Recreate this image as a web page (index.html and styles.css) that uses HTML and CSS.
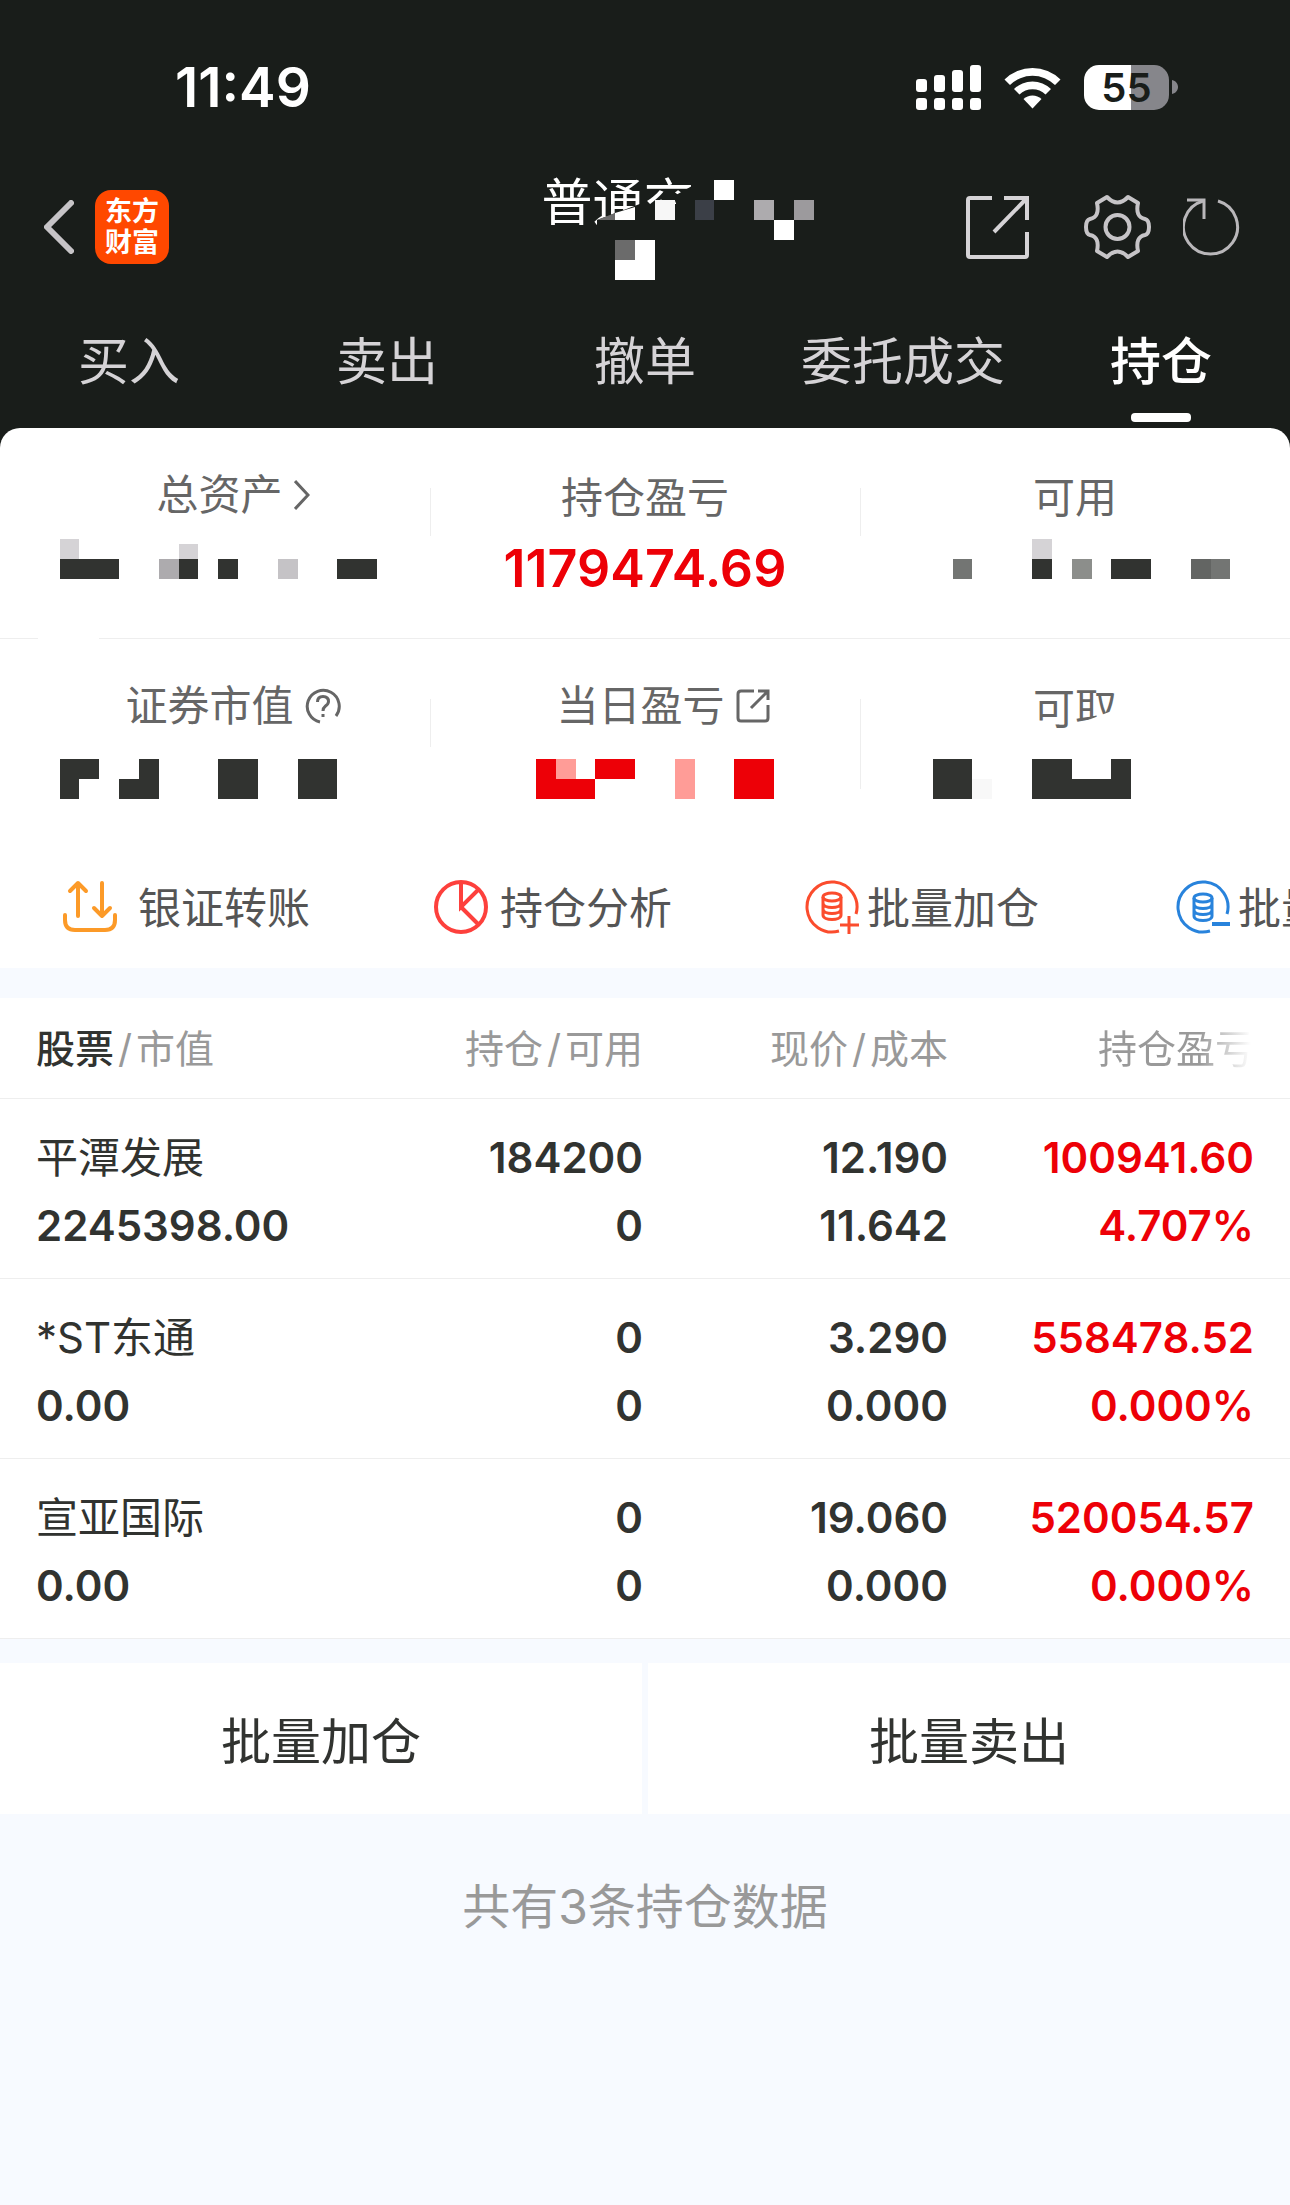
FILE: index.html
```html
<!DOCTYPE html>
<html lang="zh-CN">
	<head>
		<meta charset="utf-8">
		<meta name="viewport" content="width=device-width, initial-scale=1">
		<title>持仓</title>
		<link rel="stylesheet" href="styles.css">
	</head>
	<body>

		<div class="top">

			<div class="status">
				<span class="time">11:49</span>
				<div class="status-icons">
					<svg class="signal" width="65" height="45" viewBox="0 0 65 45" fill="#fff">
						<rect x="0" y="14" width="11" height="13" rx="3"/>
						<rect x="18" y="10" width="11" height="17" rx="3"/>
						<rect x="36" y="5" width="11" height="22" rx="3"/>
						<rect x="54" y="0" width="11" height="27" rx="3"/>
						<rect x="0" y="33" width="11" height="12" rx="3"/>
						<rect x="18" y="33" width="11" height="12" rx="3"/>
						<rect x="36" y="33" width="11" height="12" rx="3"/>
						<rect x="54" y="33" width="11" height="12" rx="3"/>
					</svg>
					<svg class="wifi" width="57" height="43" viewBox="0 0 57 43" fill="#fff">
						<path d="M0.500 13.500 A40 40 0 0 1 56.500 13.500 L51 19 A32 32 0 0 0 6 19 Z"/>
						<path d="M10 23 A26.500 26.500 0 0 1 47 23 L41.500 28.500 A18.500 18.500 0 0 0 15.500 28.500 Z"/>
						<path d="M19.500 33 A13 13 0 0 1 37.500 33 L28.500 42.500 Z"/>
					</svg>
					<div class="battery">
						<span class="level">55</span>
						<svg width="6" height="14" viewBox="0 0 6 14" fill="#86868b"><path d="M0 0 C8 2 8 12 0 14 Z"/></svg>
					</div>
				</div>
			</div>

			<header class="nav">
				<div class="nav-left">
					<button class="icon-btn" type="button" aria-label="返回">
						<svg width="30" height="54" viewBox="0 0 30 54" fill="none" stroke="#c6c4c7" stroke-width="6" stroke-linecap="round" stroke-linejoin="round"><path d="M27 3 L3 27 L27 51"/></svg>
					</button>
					<a class="logo" href="#">东方<br>财富</a>
				</div>
				<div class="title">
					<h1>普通交</h1>
					<!-- masked account name -->
					<svg class="title-mask" width="290" height="106" viewBox="542 174 290 106">
						<path fill="#191d1a" d="M597 220 L645 202 L645 204 L676 204 V195 L692 186 H748 V236 H597 Z"/>
						<path fill="#6b6b6b" d="M597 220 L615 213 V220 Z"/>
						<path fill="#fff" d="M615 213 L635 207 V220 H615 Z"/>
						<rect x="655" y="200" width="20" height="20" fill="#f7f7f7"/>
						<rect x="695" y="200" width="19" height="20" fill="#3b3f47"/>
						<rect x="714" y="180" width="20" height="20" fill="#fff"/>
						<rect x="754" y="200" width="20" height="20" fill="#adabae"/>
						<rect x="794" y="200" width="20" height="20" fill="#9c9a9d"/>
						<rect x="774" y="220" width="20" height="20" fill="#fff"/>
						<path fill="#fff" d="M615 260 H635 V240 H655 V280 H615 Z"/>
						<rect x="615" y="240" width="20" height="20" fill="#6b6b6b"/>
					</svg>
				</div>
				<div class="nav-right">
					<button class="icon-btn" type="button" aria-label="分享">
						<svg width="63" height="63" viewBox="0 0 63 63" fill="none" stroke="#d5d3d6" stroke-width="4">
							<path d="M26 2 H4 Q2 2 2 4 V59 Q2 61 4 61 H59 Q61 61 61 59 V36"/>
							<path d="M38 2 H61 V24 M60 3 L28 36"/>
						</svg>
					</button>
					<button class="icon-btn gear" type="button" aria-label="设置">
						<svg width="67" height="66" viewBox="0 0 67 66" fill="none" stroke="#c6c4c7" stroke-width="4" stroke-linejoin="round">
							<path d="M23 3 Q33.500 14 44 3 L54 9 Q51 23 61 25 Q65 26 65 33 Q65 40 61 41 Q51 43 54 57 L44 63 Q33.500 52 23 63 L13 57 Q16 43 6 41 Q2 40 2 33 Q2 26 6 25 Q16 23 13 9 Z"/>
							<circle cx="33.500" cy="33" r="12"/>
						</svg>
					</button>
					<button class="icon-btn" type="button" aria-label="刷新">
						<svg width="58" height="58" viewBox="0 0 58 58" fill="none" stroke="#b9b7ba" stroke-width="3">
							<path d="M35 3 A27 27 0 1 1 20 3"/>
							<path d="M4 2 H21 V21"/>
						</svg>
					</button>
				</div>
			</header>

			<nav class="tabs">
				<a href="#">买入</a>
				<a href="#">卖出</a>
				<a href="#">撤单</a>
				<a href="#">委托成交</a>
				<a class="active" href="#">持仓</a>
			</nav>

			<section class="summary">
				<div class="summary-row">
					<div class="cell">
						<a class="label linked" href="#">总资产
							<svg class="chevron" width="16" height="30" viewBox="0 0 16 30" fill="none" stroke="#666" stroke-width="3"><path d="M1 1 L14 15 L1 29"/></svg>
						</a>
						<svg class="mask" width="430" height="60" viewBox="0 538 430 60" fill="#313330">
							<rect x="60" y="539" width="19" height="20" fill="#d5d3d6"/>
							<rect x="60" y="559" width="59" height="20"/>
							<rect x="159" y="559" width="20" height="20" fill="#adabae"/>
							<rect x="179" y="544" width="19" height="15" fill="#d5d3d6"/>
							<rect x="179" y="559" width="19" height="20"/>
							<rect x="218" y="559" width="20" height="20"/>
							<rect x="278" y="559" width="20" height="20" fill="#c5c3c6"/>
							<rect x="337" y="559" width="40" height="20"/>
						</svg>
					</div>
					<div class="cell divided">
						<span class="label">持仓盈亏</span>
						<span class="amount">1179474.69</span>
					</div>
					<div class="cell divided">
						<span class="label">可用</span>
						<svg class="mask" width="430" height="60" viewBox="860 538 430 60" fill="#313330">
							<rect x="953" y="559" width="19" height="20" fill="#737573"/>
							<rect x="1032" y="539" width="20" height="20" fill="#d5d3d6"/>
							<rect x="1032" y="559" width="20" height="20"/>
							<rect x="1072" y="559" width="20" height="20" fill="#8c8e8b"/>
							<rect x="1111" y="559" width="40" height="20"/>
							<rect x="1191" y="559" width="20" height="20" fill="#636563"/>
							<rect x="1211" y="559" width="19" height="20" fill="#737573"/>
						</svg>
					</div>
				</div>
				<div class="rule"></div>
				<div class="summary-row">
					<div class="cell">
						<a class="label linked" href="#">证券市值
							<svg width="36" height="36" viewBox="0 0 36 36" fill="none" stroke="#666" stroke-width="3">
								<path d="M15 34 A16 16 0 1 1 31 28"/>
								<path d="M12.500 14 Q12.500 8.500 18 8.500 Q23.500 8.500 23.500 13.500 Q23.500 16 20.500 18 Q18 20 18 23 M18 26 V29"/>
							</svg>
						</a>
						<svg class="mask" width="430" height="60" viewBox="0 749 430 60" fill="#313330">
							<path d="M60 759 H99 V779 H79 V799 H60 Z"/>
							<path d="M139 759 H159 V799 H119 V779 H139 Z"/>
							<rect x="218" y="759" width="40" height="40"/>
							<rect x="298" y="759" width="39" height="40"/>
						</svg>
					</div>
					<div class="cell divided">
						<a class="label linked" href="#">当日盈亏
							<svg width="34" height="34" viewBox="0 0 34 34" fill="none" stroke="#666" stroke-width="3">
								<path d="M18 2 H5 Q2 2 2 5 V29 Q2 32 5 32 H29 Q32 32 32 29 V16"/>
								<path d="M22 2 H32 V11 M31 3 L15 19"/>
							</svg>
						</a>
						<svg class="mask" width="430" height="60" viewBox="430 749 430 60" fill="#ed0007">
							<path d="M536 759 H556 V779 H595 V799 H536 Z"/>
							<rect x="556" y="759" width="20" height="20" fill="#ff9c97"/>
							<rect x="595" y="759" width="40" height="20"/>
							<rect x="675" y="759" width="20" height="40" fill="#ff9c97"/>
							<rect x="734" y="759" width="40" height="40"/>
						</svg>
					</div>
					<div class="cell divided tall">
						<span class="label">可<span class="cut">取</span></span>
						<svg class="mask" width="430" height="60" viewBox="860 749 430 60" fill="#313330">
							<rect x="933" y="759" width="39" height="40"/>
							<rect x="972" y="779" width="20" height="20" fill="#f8f8f8"/>
							<path d="M1032 759 H1072 V779 H1111 V759 H1131 V799 H1032 Z"/>
						</svg>
					</div>
				</div>

				<div class="shortcuts">
					<a class="transfer" href="#">
						<svg width="54" height="54" viewBox="0 0 54 54" fill="none" stroke="#fc9a28" stroke-width="4" stroke-linecap="round" stroke-linejoin="round">
							<path d="M2 35 V40 Q2 50 12 50 H42 Q52 50 52 40 V35"/>
							<path d="M15 36 V3 M7 11 L15 3 L23 11"/>
							<path d="M39 3 V36 M31 28 L39 36 L47 28"/>
						</svg>
						银证转账
					</a>
					<a href="#">
						<svg width="54" height="54" viewBox="0 0 54 54" fill="none" stroke="#fd403c" stroke-width="4">
							<circle cx="27" cy="27" r="25"/>
							<path d="M27 2 V27 L45 9 M27 27 L45 45"/>
						</svg>
						持仓分析
					</a>
					<a class="bulk" href="#">
						<svg width="54" height="54" viewBox="0 0 54 54" fill="none" stroke="#fb4c2d" stroke-width="3">
							<path d="M51 34 A25 25 0 1 0 34 51"/>
							<ellipse cx="27" cy="17" rx="9" ry="4"/>
							<path d="M18 17 V35 C18 41 36 41 36 35 V17 M18 23 C18 29 36 29 36 23 M18 29 C18 35 36 35 36 29"/>
							<path d="M44 36 V54 M35 45 H54"/>
						</svg>
						批量加仓
					</a>
					<a class="bulk" href="#">
						<svg width="54" height="54" viewBox="0 0 54 54" fill="none" stroke="#2883dc" stroke-width="3">
							<path d="M51 34 A25 25 0 1 0 34 51"/>
							<ellipse cx="27" cy="18" rx="9" ry="4"/>
							<path d="M18 18 V36 C18 42 36 42 36 36 V18 M18 24 C18 30 36 30 36 24 M18 30 C18 36 36 36 36 30"/>
							<path stroke-width="4" d="M36 44 H54"/>
						</svg>
						批量卖出
					</a>
				</div>
			</section>
		</div>

		<table class="holdings">
			<thead>
				<tr>
					<th class="stock"><b>股票</b><i>/</i>市值</th>
					<th>持仓<i>/</i>可用</th>
					<th>现价<i>/</i>成本</th>
					<th class="profit"><span class="fade">持仓盈亏</span></th>
				</tr>
			</thead>
			<tbody>
				<tr>
					<td class="stock"><span class="name">平潭发展</span><br>2245398.00</td>
					<td>184200<br>0</td>
					<td>12.190<br>11.642</td>
					<td class="profit">100941.60<br>4.707%</td>
				</tr>
				<tr>
					<td class="stock"><span class="name">*ST东通</span><br>0.00</td>
					<td>0<br>0</td>
					<td>3.290<br>0.000</td>
					<td class="profit">558478.52<br>0.000%</td>
				</tr>
				<tr>
					<td class="stock"><span class="name">宣亚国际</span><br>0.00</td>
					<td>0<br>0</td>
					<td>19.060<br>0.000</td>
					<td class="profit">520054.57<br>0.000%</td>
				</tr>
			</tbody>
		</table>

		<div class="batch">
			<button type="button">批量加仓</button>
			<button type="button">批量卖出</button>
		</div>

		<p class="count">共有3条持仓数据</p>

	</body>
</html>
```

FILE: styles.css
```css
* {
	box-sizing: border-box;
}

body {
	margin: 0;
	background-color: #f7faff;
	color: #313330;
	font-family: Inter, "Noto Sans CJK SC", sans-serif;
	overflow-x: hidden;
}

a {
	color: inherit;
	text-decoration: none;
}

button {
	border: 0;
	padding: 0;
	background: none;
	color: inherit;
	font-family: inherit;
}

svg {
	display: block;
	flex: none;
}

.top {
	background-color: #191d1a;
}

/* status bar */

.status {
	display: flex;
	justify-content: space-between;
	align-items: center;
	height: 174px;
	padding: 0 112px 0 175px;
	color: #fff;
}

.time {
	font-size: 55px;
	font-weight: 600;
}

.status-icons {
	display: flex;
	align-items: center;
}

.wifi {
	margin: 0 23px;
}

.battery {
	display: flex;
	align-items: center;
	gap: 3px;
}

.level {
	width: 85px;
	border-radius: 15px;
	background: linear-gradient(to right, #fff 55%, #86868b 55%);
	color: #191d1a;
	font-size: 40px;
	font-weight: 600;
	line-height: 45px;
	text-align: center;
}

/* title bar */

.nav {
	display: grid;
	grid-template-columns: 1fr 202px 1fr;
	height: 106px;
	padding: 0 49px 0 44px;
}

.nav-left, .nav-right {
	display: flex;
	align-items: center;
}

.nav-right {
	justify-content: flex-end;
}

.gear {
	margin: 0 32px 0 55px;
}

.logo {
	width: 74px;
	height: 74px;
	margin-left: 21px;
	padding-top: 6px;
	border-radius: 16px;
	background-color: #ff4800;
	color: #fff;
	font-size: 27px;
	font-weight: 700;
	line-height: 31px;
	text-align: center;
}

.title {
	position: relative;
}

h1 {
	margin: 0;
	color: #fff;
	font-size: 51px;
	font-weight: 400;
	line-height: 58px;
}

.title-mask {
	position: absolute;
	top: 0;
	left: 0;
}

/* tabs */

.tabs {
	display: grid;
	grid-template-columns: repeat(5, 1fr);
	height: 148px;
	padding-top: 53px;
	color: #d5d3d6;
	font-size: 51px;
	line-height: 58px;
	text-align: center;
}

.tabs .active {
	color: #fff;
	font-weight: 500;
}

.tabs .active::after {
	content: "";
	display: block;
	width: 60px;
	height: 9px;
	margin: 22px auto 0;
	border-radius: 4px;
	background-color: #fff;
}

/* account summary */

.summary {
	border-radius: 20px 20px 0 0;
	background-color: #fff;
	overflow: hidden;
}

.summary-row {
	display: grid;
	grid-template-columns: repeat(3, 1fr);
	height: 210px;
	padding-top: 45px;
}

.rule {
	height: 1px;
	background: linear-gradient(to right, #eee 38px, #fff 38px, #fff 99px, #eee 99px);
}

.cell {
	position: relative;
	display: flex;
	flex-direction: column;
	align-items: center;
	gap: 15px;
}

.divided::before {
	content: "";
	position: absolute;
	top: 15px;
	left: 0;
	width: 1px;
	height: 48px;
	background-color: #eee;
}

.tall::before {
	height: 90px;
}

.label {
	display: flex;
	align-items: center;
	height: 50px;
	color: #666;
	font-size: 42px;
	line-height: 50px;
}

.label.linked {
	gap: 11px;
	padding: 0 0 6px 36px;
}

.cut {
	clip-path: polygon(0 0, 100% 0, 100% 50%, 0 82%);
}

.amount {
	color: #ed0007;
	font-size: 52px;
	font-weight: 600;
	line-height: 62px;
}

.shortcuts {
	display: flex;
	height: 119px;
	padding: 0 0 7px 63px;
	color: #555;
	font-size: 43px;
}

.shortcuts a {
	display: flex;
	flex: none;
	align-items: center;
	gap: 12px;
	width: 371px;
	white-space: nowrap;
}

.shortcuts svg {
	margin-top: 4px;
}

.shortcuts .transfer {
	gap: 21px;
}

.shortcuts .bulk {
	gap: 8px;
}

/* holdings */

.holdings {
	width: 100%;
	margin-top: 30px;
	border-collapse: collapse;
	table-layout: fixed;
	background-color: #fff;
	text-align: right;
}

.holdings th {
	height: 100px;
	padding: 0 0 4px;
	border-bottom: 1px solid #eee;
	color: #999;
	font-size: 39px;
	font-weight: 400;
}

.holdings td {
	padding: 25px 0 18px;
	border-bottom: 1px solid #eee;
	font-size: 42px;
	font-weight: 600;
	line-height: 68px;
}

.holdings .stock {
	width: 338px;
	padding-left: 36px;
	text-align: left;
}

.holdings .profit {
	width: 342px;
	padding-right: 36px;
}

.holdings td.profit {
	color: #ed0007;
}

.holdings b {
	color: #313330;
	font-weight: 500;
}

.holdings i {
	margin: 0 4px;
	font-style: normal;
}

.name {
	font-weight: 400;
}

.fade {
	background: linear-gradient(to right, #999 65%, #fff 98%);
	background-clip: text;
	-webkit-background-clip: text;
	color: transparent;
}

.batch {
	display: grid;
	grid-template-columns: 1fr 1fr;
	gap: 6px;
	margin-top: 24px;
}

.batch button {
	height: 151px;
	background-color: #fff;
	font-size: 50px;
}

.count {
	margin: 63px 0;
	color: #999;
	font-size: 48px;
	line-height: 60px;
	text-align: center;
}
```
